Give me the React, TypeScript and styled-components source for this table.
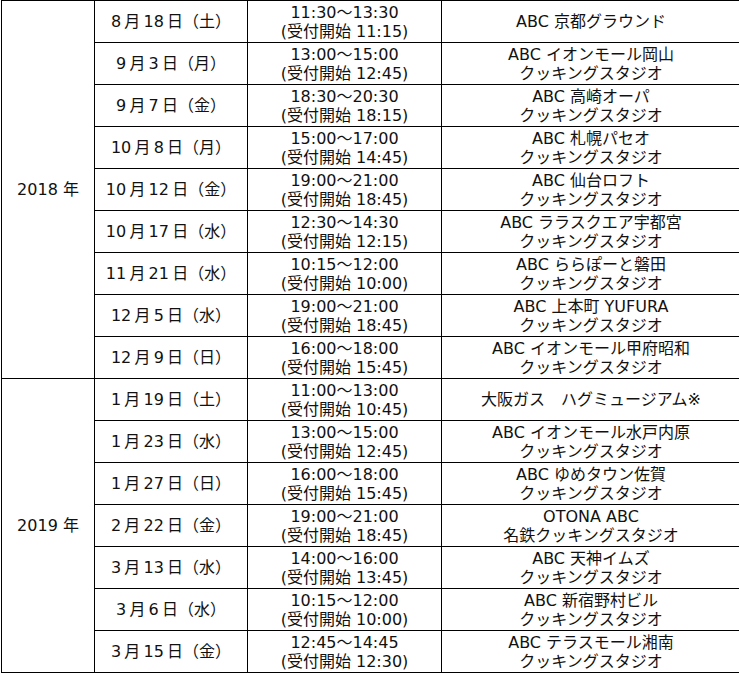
import React from 'react';
import styled, { createGlobalStyle } from 'styled-components';

const GlobalStyle = createGlobalStyle`
  html, body {
    margin: 0;
    padding: 0;
    background: #ffffff;
  }
  body {
    font-family: "DejaVu Sans", "Noto Sans CJK JP", sans-serif;
    color: #111111;
  }
`;

const Page = styled.div`
  padding-left: 1px;
`;

const Table = styled.table`
  border-collapse: collapse;
  table-layout: fixed;
  width: 735px;
  font-size: 16px;
`;

const Cell = styled.td<{ width: number }>`
  width: ${props => props.width}px;
  height: 41px;
  padding: 0;
  border: 1px solid #000000;
  text-align: center;
  vertical-align: middle;
  line-height: 19px;
  white-space: nowrap;
`;

const Line = styled.div`
  display: block;
`;

interface Session {
  date: string;
  time: string;
  open: string;
  venue: string[];
}

const studio = 'クッキングスタジオ';
const sp = '\u2009';

const d = (m: number, day: number, w: string) => `${m}${sp}月${sp}${day}${sp}日（${w}）`;

const schedule: { year: string; sessions: Session[] }[] = [
  {
    year: '2018 年',
    sessions: [
      { date: d(8, 18, '土'), time: '11:30～13:30', open: '11:15', venue: ['ABC 京都グラウンド'] },
      { date: d(9, 3, '月'), time: '13:00～15:00', open: '12:45', venue: ['ABC イオンモール岡山', studio] },
      { date: d(9, 7, '金'), time: '18:30～20:30', open: '18:15', venue: ['ABC 高崎オーパ', studio] },
      { date: d(10, 8, '月'), time: '15:00～17:00', open: '14:45', venue: ['ABC 札幌パセオ', studio] },
      { date: d(10, 12, '金'), time: '19:00～21:00', open: '18:45', venue: ['ABC 仙台ロフト', studio] },
      { date: d(10, 17, '水'), time: '12:30～14:30', open: '12:15', venue: ['ABC ララスクエア宇都宮', studio] },
      { date: d(11, 21, '水'), time: '10:15～12:00', open: '10:00', venue: ['ABC ららぽーと磐田', studio] },
      { date: d(12, 5, '水'), time: '19:00～21:00', open: '18:45', venue: ['ABC 上本町 YUFURA', studio] },
      { date: d(12, 9, '日'), time: '16:00～18:00', open: '15:45', venue: ['ABC イオンモール甲府昭和', studio] },
    ],
  },
  {
    year: '2019 年',
    sessions: [
      { date: d(1, 19, '土'), time: '11:00～13:00', open: '10:45', venue: ['大阪ガス　ハグミュージアム※'] },
      { date: d(1, 23, '水'), time: '13:00～15:00', open: '12:45', venue: ['ABC イオンモール水戸内原', studio] },
      { date: d(1, 27, '日'), time: '16:00～18:00', open: '15:45', venue: ['ABC ゆめタウン佐賀', studio] },
      { date: d(2, 22, '金'), time: '19:00～21:00', open: '18:45', venue: ['OTONA ABC', '名鉄' + studio] },
      { date: d(3, 13, '水'), time: '14:00～16:00', open: '13:45', venue: ['ABC 天神イムズ', studio] },
      { date: d(3, 6, '水'), time: '10:15～12:00', open: '10:00', venue: ['ABC 新宿野村ビル', studio] },
      { date: d(3, 15, '金'), time: '12:45～14:45', open: '12:30', venue: ['ABC テラスモール湘南', studio] },
    ],
  },
];

const App: React.FC = () => {
  return (
    <>
      <GlobalStyle />
      <Page>
        <Table>
          <tbody>
            {schedule.map(group =>
              group.sessions.map((s, i) => (
                <tr key={group.year + s.date}>
                  {i === 0 && (
                    <Cell width={92} rowSpan={group.sessions.length}>
                      {group.year}
                    </Cell>
                  )}
                  <Cell width={152}>{s.date}</Cell>
                  <Cell width={193}>
                    <Line>{s.time}</Line>
                    <Line>(受付開始 {s.open})</Line>
                  </Cell>
                  <Cell width={298}>
                    {s.venue.map(v => (
                      <Line key={v}>{v}</Line>
                    ))}
                  </Cell>
                </tr>
              ))
            )}
          </tbody>
        </Table>
      </Page>
    </>
  );
};

export default App;
